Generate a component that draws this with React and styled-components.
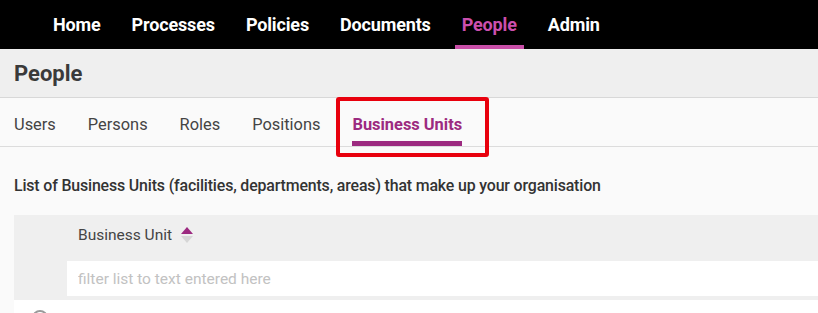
import React from 'react';
import styled, { createGlobalStyle } from 'styled-components';

const GlobalStyle = createGlobalStyle`
  body {
    margin: 0;
    background: #fafafa;
    font-family: Roboto, "Liberation Sans", sans-serif;
    overflow: hidden;
  }
`;

const Page = styled.div`
  width: 818px;
  height: 313px;
  overflow: hidden;
  background: #fafafa;
`;

const TopNav = styled.nav`
  display: flex;
  height: 49px;
  background: #000;
  padding-left: 37.5px;
`;

const NavItem = styled.a`
  position: relative;
  display: flex;
  align-items: center;
  padding: 0 15.5px 1px;
  color: ${(p) => (p.active ? '#cc4fae' : '#fff')};
  font-weight: 700;
  font-size: 18px;
  letter-spacing: -0.15px;

  &::after {
    content: '';
    display: ${(p) => (p.active ? 'block' : 'none')};
    position: absolute;
    left: 9px;
    right: 8px;
    bottom: 0;
    height: 4px;
    background: #c94fa8;
  }
`;

const Header = styled.div`
  display: flex;
  align-items: center;
  height: 48px;
  padding-left: 14px;
  background: #efefef;
  border-bottom: 1px solid #d8d8d8;
  color: #3a3a3a;
  font-size: 22px;
  font-weight: 700;
`;

const TabBar = styled.div`
  display: flex;
  height: 48px;
  padding-left: 14px;
  gap: 32px;
  border-bottom: 1px solid #dcdcdc;
  background: #fafafa;
`;

const Tab = styled.div`
  position: relative;
  display: flex;
  align-items: center;
  padding-top: 4px;
  box-sizing: border-box;
  color: ${(p) => (p.active ? '#9c2a80' : '#444')};
  font-weight: ${(p) => (p.active ? 700 : 400)};
  font-size: 16.4px;
  box-shadow: ${(p) => (p.active ? 'inset 0 -5px 0 #9c2a80' : 'none')};
  height: 48px;
`;

const Highlight = styled.div`
  position: absolute;
  left: -16px;
  right: -27px;
  top: -1px;
  height: 60px;
  box-sizing: border-box;
  border: 4px solid #e8000d;
  border-radius: 3px;
  pointer-events: none;
`;

const Content = styled.div`
  padding: 29px 0 0 14px;
`;

const Description = styled.p`
  margin: 0 0 20px;
  color: #333;
  font-size: 15.9px;
  font-weight: 500;
  letter-spacing: -0.15px;
`;

const TableHead = styled.div`
  background: #efefef;
  padding: 0 0 4px 53px;
`;

const ColumnTitle = styled.div`
  display: flex;
  align-items: center;
  gap: 8px;
  height: 46px;
  padding: 0 0 6px 11px;
  box-sizing: border-box;
  color: #444;
  font-size: 15.5px;
`;

const SortIcon = styled.svg`
  width: 14px;
  height: 20px;
  margin-top: -1px;
`;

const FilterInput = styled.input`
  display: block;
  width: 100%;
  height: 35px;
  box-sizing: border-box;
  border: none;
  outline: none;
  padding: 0 11px;
  background: #fff;
  font-family: inherit;
  font-size: 15.5px;
  color: #444;
  &::placeholder {
    color: #c2c2c2;
  }
`;

const Row = styled.div`
  display: flex;
  align-items: flex-start;
  height: 30px;
  background: #fff;
  padding: 10px 0 0 18px;
  box-sizing: border-box;
`;

const Radio = styled.span`
  width: 16px;
  height: 16px;
  border-radius: 50%;
  border: 2px solid #9a9a9a;
  box-sizing: border-box;
`;

export default function App() {
  const nav = ['Home', 'Processes', 'Policies', 'Documents', 'People', 'Admin'];
  const tabs = ['Users', 'Persons', 'Roles', 'Positions', 'Business Units'];
  return (
    <Page>
      <GlobalStyle />
      <TopNav>
        {nav.map((n) => (
          <NavItem key={n} active={n === 'People'}>
            {n}
          </NavItem>
        ))}
      </TopNav>
      <Header>People</Header>
      <TabBar>
        {tabs.map((t) => (
          <Tab key={t} active={t === 'Business Units'}>
            {t}
            {t === 'Business Units' && <Highlight />}
          </Tab>
        ))}
      </TabBar>
      <Content>
        <Description>
          List of Business Units (facilities, departments, areas) that make up your organisation
        </Description>
        <TableHead>
          <ColumnTitle>
            Business Unit
            <SortIcon viewBox="0 0 14 20">
              <path d="M7 2 L13 9 L1 9 Z" fill="#9c2a80" />
              <path d="M1 11 L13 11 L7 18 Z" fill="#d6d6d6" />
            </SortIcon>
          </ColumnTitle>
          <FilterInput placeholder="filter list to text entered here" />
        </TableHead>
        <Row>
          <Radio />
        </Row>
      </Content>
    </Page>
  );
}
